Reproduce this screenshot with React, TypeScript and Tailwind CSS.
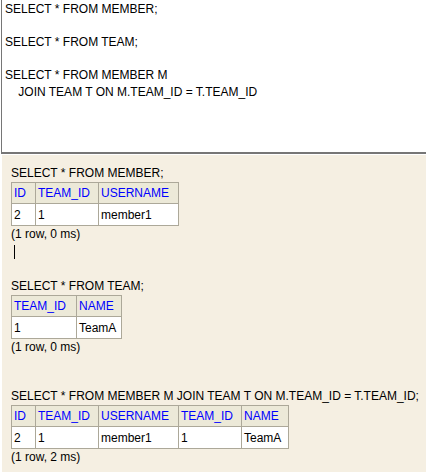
const sql = `SELECT * FROM MEMBER;

SELECT * FROM TEAM;

SELECT * FROM MEMBER M
    JOIN TEAM T ON M.TEAM_ID = T.TEAM_ID`;

type Col = { name: string; w: string };

const ResultTable = ({ cols, row }: { cols: Col[]; row: string[] }) => (
  <table className="mt-[2px] border-collapse">
    <thead>
      <tr>
        {cols.map((c, i) => (
          <th
            key={i}
            className={`${c.w} h-[21px] border border-[#aca899] bg-[#ece9d8] px-[2px] py-0 text-left align-middle font-normal text-[#0000ff]`}
          >
            {c.name}
          </th>
        ))}
      </tr>
    </thead>
    <tbody>
      <tr>
        {row.map((v, i) => (
          <td key={i} className="h-[22px] border border-[#aca899] bg-white px-[2px] py-0 align-middle">
            {v}
          </td>
        ))}
      </tr>
    </tbody>
  </table>
);

export default function App() {
  return (
    <div className="min-h-[472px] bg-white text-[12px] leading-[14px] text-black [font-family:'Liberation_Sans',Arial,sans-serif]">
      {/* query editor */}
      <div className="ml-px h-[154px] border-b-2 border-l border-[#767676] bg-white pl-[3px] pt-[1px]">
        <div className="whitespace-pre leading-[16.5px]">{sql}</div>
      </div>

      {/* results */}
      <div className="ml-[2px] mt-[1px] min-h-[317px] bg-[#f5efe2] pl-[9px] pt-[11px]">
        <div>SELECT * FROM MEMBER;</div>
        <ResultTable
          cols={[
            { name: 'ID', w: 'w-[24px]' },
            { name: 'TEAM_ID', w: 'w-[63px]' },
            { name: 'USERNAME', w: 'w-[80px]' },
          ]}
          row={['2', '1', 'member1']}
        />
        <div className="mt-[1px]">(1 row, 0 ms)</div>
        <div className="ml-[3px] mt-[4px] h-[14px] w-px bg-black" />

        <div className="mt-[20px]">SELECT * FROM TEAM;</div>
        <ResultTable
          cols={[
            { name: 'TEAM_ID', w: 'w-[65px]' },
            { name: 'NAME', w: 'w-[45px]' },
          ]}
          row={['1', 'TeamA']}
        />
        <div className="mt-[1px]">(1 row, 0 ms)</div>

        <div className="mt-[35px]">SELECT * FROM MEMBER M JOIN TEAM T ON M.TEAM_ID = T.TEAM_ID;</div>
        <ResultTable
          cols={[
            { name: 'ID', w: 'w-[24px]' },
            { name: 'TEAM_ID', w: 'w-[63px]' },
            { name: 'USERNAME', w: 'w-[80px]' },
            { name: 'TEAM_ID', w: 'w-[63px]' },
            { name: 'NAME', w: 'w-[47px]' },
          ]}
          row={['2', '1', 'member1', '1', 'TeamA']}
        />
        <div className="mt-[1px]">(1 row, 2 ms)</div>
      </div>
    </div>
  );
}
